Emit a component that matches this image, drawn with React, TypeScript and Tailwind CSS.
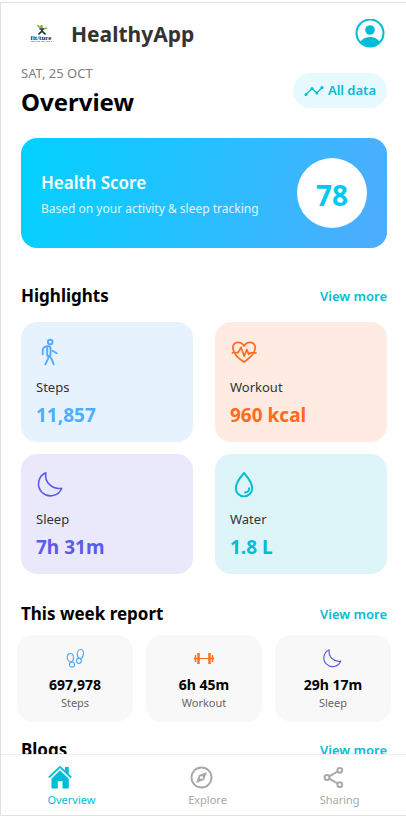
import type { ReactNode } from "react";

function Logo() {
  return (
    <svg viewBox="0 0 40 40" className="h-10 w-10" role="img" aria-label="Fitness logo">
      <circle cx="20.500" cy="12.500" r="1.600" fill="#8aae32" />
      <path d="M16.500 11l3 3.500M23 15l3-1" fill="none" stroke="#8aae32" strokeWidth="1.400" />
      <path d="M18.500 15h4.500M21 15v3.500M20.500 17.500l-3 3M21.500 17.500l3 3" fill="none" stroke="#12304a" strokeWidth="1.700" />
      <text x="20" y="26" textAnchor="middle" fill="#12304a" fontFamily="Liberation Serif, serif" fontWeight="700" fontSize="7">fit/ture</text>
      <path d="M10 27.500h21" stroke="#a5c653" strokeWidth="1" strokeDasharray="4 1" />
    </svg>
  );
}

function Profile() {
  return (
    <svg viewBox="0 0 30 30" className="h-[30px] w-[30px]" aria-hidden="true">
      <circle cx="15" cy="14" r="13.500" fill="none" stroke="#00bcd4" strokeWidth="2" />
      <circle cx="15" cy="11" r="4.800" fill="#00bcd4" />
      <path d="M5.500 22.200C8 19.500 11.200 18 15 18s7 1.500 9.500 4.200A13.500 13.500 0 0 1 15 27.500a13.500 13.500 0 0 1-9.500-5.300z" fill="#00bcd4" />
    </svg>
  );
}

function Trend() {
  return (
    <svg viewBox="0 0 20 12" className="h-3 w-5" fill="#00bcd4" aria-hidden="true">
      <path d="M2 9.500l6-6 5 4.500 5-5.500" fill="none" stroke="#00bcd4" strokeWidth="1.200" />
      <circle cx="2" cy="9.500" r="1.500" />
      <circle cx="8" cy="3.500" r="1.500" />
      <circle cx="12.800" cy="8" r="1.500" />
      <circle cx="18" cy="2.500" r="1.500" />
    </svg>
  );
}

function Walker() {
  return (
    <svg viewBox="0 0 30 30" className="h-[30px] w-[30px]" fill="none" stroke="#4facfe" strokeWidth="1.900" strokeLinecap="round" strokeLinejoin="round" aria-hidden="true">
      <circle cx="14.200" cy="5" r="2.300" />
      <path d="M6.700 17.300v-3.600c0-2.600 1.900-4.500 4.300-4.500h1.500c1.400 0 2 1 2 2.200v6c0 1-.7 1.700-1.600 1.700s-1.700-.7-1.700-1.700V9.500" />
      <path d="M16.500 13.700l4.200 2.500M12.600 20l-.8 2.300L9.300 27.300M14 19.500l2 3.300 1.700 4.500" />
    </svg>
  );
}

function HeartPulse() {
  return (
    <svg viewBox="0 0 30 30" className="h-[30px] w-[30px]" fill="none" stroke="#ff6b1a" strokeWidth="1.700" strokeLinecap="round" strokeLinejoin="round" aria-hidden="true">
      <path d="M3.800 14.200C1.500 9.500 4 5.300 7.800 5.300c3 0 5 1.600 6.200 3.700 1.200-2.100 3.200-3.700 6.200-3.700 3.900 0 6.300 4.200 4 9" />
      <path d="M5.200 17.200C7.500 20.300 10.800 22.800 14 25c3.200-2.200 6.500-4.700 8.800-7.700" />
      <path d="M2.500 15.700H8l3-5.400 3.200 9 2.600-6.800 2 4.800 1.500-1.500h5.700" />
    </svg>
  );
}

function Moon({ small = false }: { small?: boolean }) {
  return (
    <svg viewBox="0 0 30 30" className={small ? "h-[22px] w-[22px]" : "h-[30px] w-[30px]"} fill="none" stroke="#5b5be8" strokeWidth="1.600" strokeLinejoin="round" aria-hidden="true">
      <path d="M9.800 3.800a12 12 0 1 0 15.900 15.400A13.400 13.400 0 0 1 9.800 3.800z" />
    </svg>
  );
}

function Drop() {
  return (
    <svg viewBox="0 0 30 30" className="h-[30px] w-[30px]" fill="none" stroke="#00bcd4" strokeWidth="1.900" strokeLinecap="round" strokeLinejoin="round" aria-hidden="true">
      <path d="M14 4C10.500 8 5.800 13.800 5.800 19.200a8.200 8.200 0 0 0 16.400 0C22.200 13.800 17.500 8 14 4z" />
      <path d="M19.200 19.200c0 2.400-1.800 4.100-4.200 4.300" />
    </svg>
  );
}

function Footprints() {
  return (
    <svg viewBox="0 0 22 22" className="h-[22px] w-[22px]" fill="none" stroke="#4facfe" strokeWidth="1.200" strokeLinejoin="round" aria-hidden="true">
      <path d="M6.500 6.500c1.900 0 3 2.200 3 4.700 0 1.600-.6 2.800-1.600 3.700l-2.200-.2c-1.500-1-2.500-2.700-2.500-4.500 0-2.100 1.500-3.700 3.300-3.700z" />
      <path d="M16.700 2.500c1.900 0 2.800 1.700 2.800 4 0 2-1 4-2.300 5l-2.200-.3c-1-.8-1.700-2.400-1.700-4.200 0-2.500 1.500-4.500 3.400-4.500z" />
      <circle cx="8" cy="17.500" r="2.500" />
      <circle cx="14.900" cy="13.800" r="2.500" />
    </svg>
  );
}

function Dumbbell() {
  return (
    <svg viewBox="0 0 22 22" className="h-[22px] w-[22px]" fill="none" stroke="#ff6b1a" aria-hidden="true">
      <path d="M3 11.500h16" strokeWidth="1" />
      <path d="M5.500 6v11M16.500 6v11" strokeWidth="2.400" />
      <path d="M2.500 8v7M19.500 8v7" strokeWidth="1.500" />
      <path d="M1 11.500h2M19 11.500h2" strokeWidth="1.500" />
    </svg>
  );
}

function House() {
  return (
    <svg viewBox="0 0 24 24" className="ml-px h-6 w-6" fill="currentColor" aria-hidden="true">
      <path d="M17 2h3.500v8L17 6.500z" />
      <path d="M12 5.200l8.800 8.300V22.500a1 1 0 0 1-1 1H14.500v-7.500h-4.700v7.500H4.500a1 1 0 0 1-1-1v-9z" />
      <path d="M1 13.300L12 2.700l11 10.600" fill="none" stroke="#fff" strokeWidth="3" />
      <path d="M.8 12.500L12 1.800l11.200 10.700" fill="none" stroke="currentColor" strokeWidth="1.800" strokeLinejoin="round" />
      <path d="M17 2h3.500v7L17 5.700z" />
    </svg>
  );
}

function Compass() {
  return (
    <svg viewBox="0 0 24 24" className="ml-px h-6 w-6" fill="none" stroke="currentColor" aria-hidden="true">
      <circle cx="12.500" cy="12.500" r="10" strokeWidth="1.900" />
      <path fillRule="evenodd" d="M18 7l-3 8-8 3 3-8zM12.500 10.900a1.600 1.600 0 1 0 0 3.200 1.600 1.600 0 0 0 0-3.200z" fill="currentColor" stroke="none" />
    </svg>
  );
}

function Share() {
  return (
    <svg viewBox="0 0 24 24" className="ml-px h-6 w-6" fill="none" stroke="currentColor" strokeWidth="2" aria-hidden="true">
      <circle cx="6" cy="12.500" r="2.400" />
      <circle cx="18.800" cy="5.300" r="2.400" />
      <circle cx="18.800" cy="19.700" r="2.400" />
      <path d="M8.200 11.300l8.400-4.800M8.200 13.700l8.400 4.800" />
    </svg>
  );
}

type Metric = { label: string; value: string; icon: ReactNode; tint?: string };

const highlights: Metric[] = [
  { label: "Steps", value: "11,857", icon: <Walker />, tint: "bg-[#e6f3ff] text-[#4facfe]" },
  { label: "Workout", value: "960 kcal", icon: <HeartPulse />, tint: "bg-[#ffebe2] text-[#ff6b1a]" },
  { label: "Sleep", value: "7h 31m", icon: <Moon />, tint: "bg-[#eae9fc] text-[#5b5be8]" },
  { label: "Water", value: "1.8 L", icon: <Drop />, tint: "bg-[#ddf5f9] text-[#00bcd4]" },
];

const week: Metric[] = [
  { label: "Steps", value: "697,978", icon: <Footprints /> },
  { label: "Workout", value: "6h 45m", icon: <Dumbbell /> },
  { label: "Sleep", value: "29h 17m", icon: <Moon small /> },
];

const tabs = [
  { label: "Overview", icon: <House />, color: "text-[#00bcd4]" },
  { label: "Explore", icon: <Compass />, color: "text-[#a8a8a8]" },
  { label: "Sharing", icon: <Share />, color: "text-[#a8a8a8]" },
];

function SectionTitle({ children }: { children: string }) {
  return (
    <div className="flex items-center justify-between">
      <h2 className="text-[17px] leading-6 font-bold">{children}</h2>
      <a href="#" className="text-[13px] leading-6 font-semibold text-[#00bcd4]">View more</a>
    </div>
  );
}

export default function App() {
  return (
    <div className="h-screen bg-white pt-0.5 font-['Noto_Sans','Open_Sans',sans-serif] text-black">
      <div className="flex h-full flex-col border-y border-l border-[#dee2e6]">
        <main className="min-h-0 flex-1 overflow-hidden pr-[19px] pl-5">
          <header className="flex h-[62px] items-center justify-between">
            <div className="flex items-center gap-2.5">
              <Logo />
              <span className="text-[21px] leading-8 font-bold text-[#333333]">HealthyApp</span>
            </div>
            <button type="button" aria-label="Profile" className="mr-0.5">
              <Profile />
            </button>
          </header>

          <div className="flex items-start justify-between">
            <div>
              <p className="text-[13px] leading-4 text-[#808080]">SAT, 25 OCT</p>
              <h1 className="text-2xl leading-[42px] font-bold">Overview</h1>
            </div>
            <button type="button" className="mt-2 flex h-[35px] items-center gap-1 rounded-full bg-[#e5f9ff] px-[11px] text-[13px] font-semibold text-[#00bcd4]">
              <Trend />
              All data
            </button>
          </div>

          <section className="mt-[15px] flex items-center justify-between rounded-2xl bg-[linear-gradient(105deg,#00d2ff,#4facfe)] p-5 text-white">
            <div className="pt-1">
              <h2 className="text-[17px] leading-7 font-semibold">Health Score</h2>
              <p className="text-xs leading-6 opacity-85">Based on your activity &amp; sleep tracking</p>
            </div>
            <div className="flex size-[70px] shrink-0 items-center justify-center rounded-full bg-white pt-1 text-[28px] leading-8 font-bold text-[#00c8f5]">78</div>
          </section>

          <section className="mt-9">
            <SectionTitle>Highlights</SectionTitle>
            <div className="mt-3.5 grid grid-cols-2 gap-x-[22px] gap-y-3">
              {highlights.map((m) => (
                <article key={m.label} className={`h-[120px] rounded-2xl p-[15px] ${m.tint}`}>
                  {m.icon}
                  <p className="mt-2 text-[13px] leading-6 text-[#333333]">{m.label}</p>
                  <p className="text-[19px] leading-8 font-bold">{m.value}</p>
                </article>
              ))}
            </div>
          </section>

          <section className="mt-7">
            <SectionTitle>This week report</SectionTitle>
            <div className="-mx-1 mt-[9px] grid grid-cols-3 gap-[13px]">
              {week.map((m) => (
                <article key={m.label} className="flex h-[87px] flex-col items-center rounded-2xl bg-[#f8f8f8] pt-3">
                  {m.icon}
                  <p className="mt-1.5 text-sm leading-5 font-bold">{m.value}</p>
                  <p className="text-[11px] leading-4 text-[#666666]">{m.label}</p>
                </article>
              ))}
            </div>
          </section>

          <section className="mt-4">
            <SectionTitle>Blogs</SectionTitle>
          </section>
        </main>

        <nav className="flex h-[61px] shrink-0 justify-around border-t border-[#eeeeee] bg-white pt-2.5">
          {tabs.map((t) => (
            <a key={t.label} href="#" className={`flex flex-col text-[11px] leading-[22px] ${t.color}`}>
              {t.icon}
              {t.label}
            </a>
          ))}
        </nav>
      </div>
    </div>
  );
}
